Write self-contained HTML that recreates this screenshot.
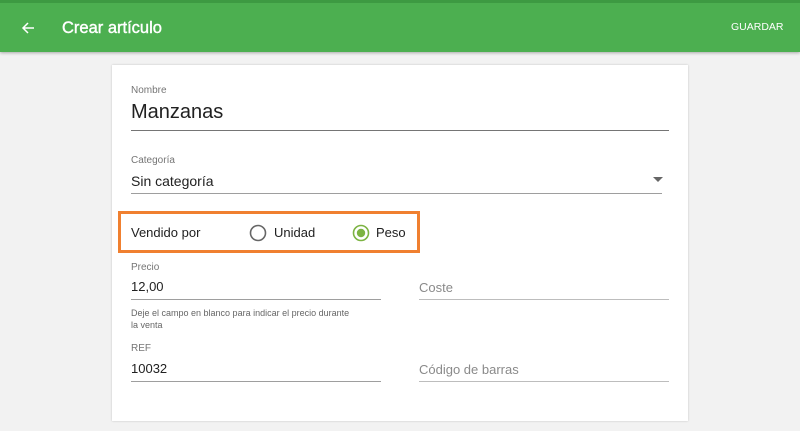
<!DOCTYPE html>
<html><head><meta charset="utf-8"><style>
*{margin:0;padding:0;box-sizing:border-box}
body{width:800px;height:431px;background:#f2f2f2;font-family:"Liberation Sans",sans-serif;position:relative;overflow:hidden}
.a{position:absolute;white-space:nowrap}
.bar{position:absolute;left:0;top:0;width:800px;height:52px;background:#4caf50;border-top:3px solid #3d9a42;box-shadow:0 1px 3px rgba(0,0,0,.3)}
.card{position:absolute;left:112px;top:65px;width:576px;height:356px;background:#fff;box-shadow:0 0 2px rgba(0,0,0,.2)}
.lab{font-size:10px;color:#757575}
.line{position:absolute;height:1px;background:#9e9e9e}
.t{font-size:14px;color:#212121}
.ph{font-size:13px;color:#8a8a8a}
</style></head><body>
<div class="bar"></div>
<svg class="a" style="left:20px;top:20px" width="16" height="16" viewBox="0 0 16 16"><path d="M14 8H3M8 3L3 8l5 5" stroke="#fff" stroke-width="1.5" fill="none"/></svg>
<div class="a" style="left:62px;top:19px;font-size:16.5px;color:#fff;-webkit-text-stroke:0.4px #fff">Crear artículo</div>
<div class="a" style="left:731px;top:21px;font-size:10.5px;color:#fff">GUARDAR</div>
<div class="card"></div>
<div class="a lab" style="left:131px;top:85px">Nombre</div>
<div class="a" style="left:131px;top:101px;font-size:20px;color:#212121">Manzanas</div>
<div class="line" style="left:131px;top:130px;width:538px;background:#757575"></div>
<div class="a lab" style="left:131px;top:155px">Categoría</div>
<div class="a t" style="left:131px;top:173px">Sin categoría</div>
<svg class="a" style="left:653px;top:177px" width="10" height="5"><path d="M0 0h10L5 5z" fill="#666"/></svg>
<div class="line" style="left:131px;top:193px;width:531px"></div>
<div class="a" style="left:118px;top:211px;width:302px;height:42px;border:3px solid #f08030"></div>
<div class="a t" style="left:131px;top:225px;font-size:13px">Vendido por</div>
<svg class="a" style="left:249px;top:224px" width="18" height="18"><circle cx="9" cy="9" r="7.5" fill="none" stroke="#666" stroke-width="1.6"/></svg>
<div class="a t" style="left:274px;top:225px;font-size:13px">Unidad</div>
<svg class="a" style="left:352px;top:224px" width="18" height="18"><circle cx="9" cy="9" r="7.5" fill="none" stroke="#7cb342" stroke-width="1.6"/><circle cx="9" cy="9" r="4.2" fill="#7cb342"/></svg>
<div class="a t" style="left:376px;top:225px;font-size:13px">Peso</div>
<div class="a lab" style="left:131px;top:262px">Precio</div>
<div class="a t" style="left:131px;top:279px;font-size:13px">12,00</div>
<div class="line" style="left:131px;top:299px;width:250px"></div>
<div class="a ph" style="left:419px;top:280px">Coste</div>
<div class="line" style="left:419px;top:299px;width:250px;background:#bdbdbd"></div>
<div class="a lab" style="left:131px;top:307px;font-size:9px;line-height:12px;color:#666">Deje el campo en blanco para indicar el precio durante<br>la venta</div>
<div class="a lab" style="left:131px;top:343px">REF</div>
<div class="a t" style="left:131px;top:361px;font-size:13px">10032</div>
<div class="line" style="left:131px;top:381px;width:250px"></div>
<div class="a ph" style="left:419px;top:362px">Código de barras</div>
<div class="line" style="left:419px;top:381px;width:250px;background:#bdbdbd"></div>
</body></html>
